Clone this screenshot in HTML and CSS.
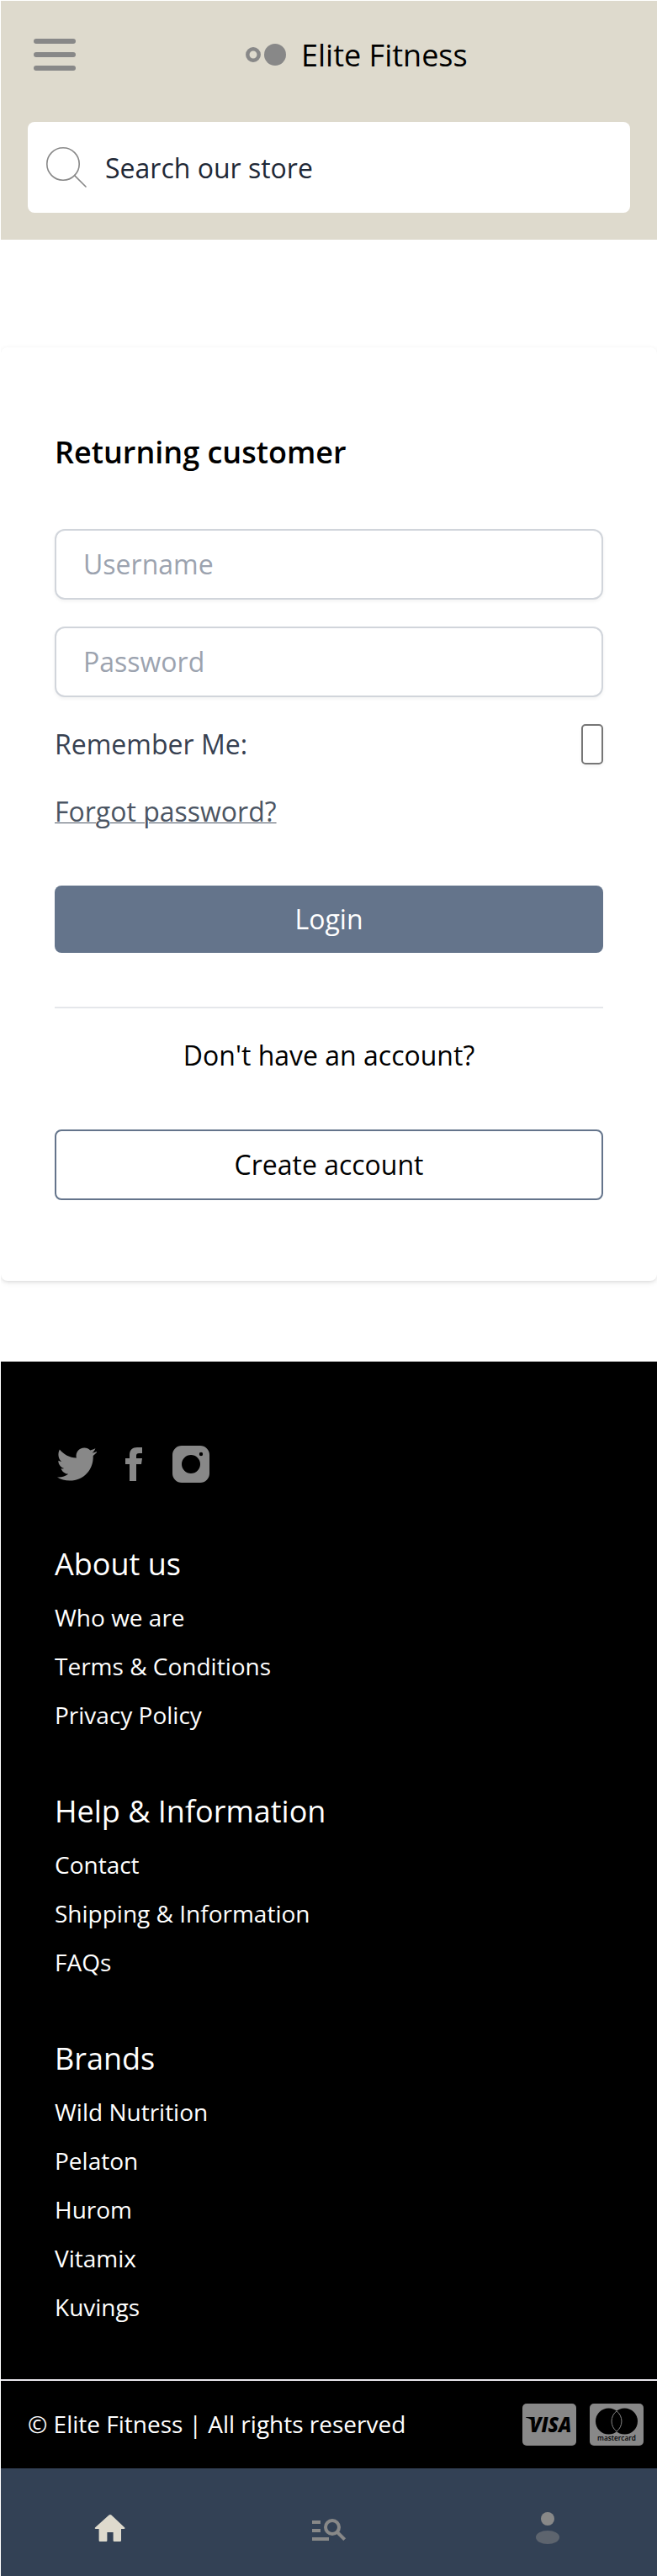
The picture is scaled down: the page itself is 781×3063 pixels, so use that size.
FILE: index.html
```html
<!DOCTYPE html>
<html lang="en">
<head>
<meta charset="utf-8">
<title>Elite Fitness</title>
<link rel="stylesheet" href="styles.css">
</head>
<body>
<header class="header">
  <div class="topbar">
    <svg class="menu-icon" viewBox="0 0 50 38"><path d="M3 3h44M3 19h44M3 35h44"/></svg>
    <div class="brand">
      <svg class="brand-icon" viewBox="0 0 48 26"><circle class="ring" cx="9" cy="13" r="6.7"/><circle class="dot" cx="35" cy="13" r="13"/></svg>
      <span class="brand-name">Elite Fitness</span>
    </div>
  </div>
  <label class="search">
    <svg class="search-icon" viewBox="0 0 48 48"><circle cx="20" cy="20" r="19.2"/><path d="M33.6 33.6 47 47"/></svg>
    <span class="search-text">Search our store</span>
  </label>
</header>

<main class="card">
  <h1 class="card-title">Returning customer</h1>
  <form class="form">
    <input class="field" type="text" placeholder="Username">
    <input class="field" type="password" placeholder="Password">
    <div class="remember"><span>Remember Me:</span><span class="checkbox"></span></div>
    <a class="forgot">Forgot password?</a>
    <button class="login" type="button">Login</button>
  </form>
  <hr class="divider">
  <p class="prompt">Don't have an account?</p>
  <a class="create">Create account</a>
</main>

<footer class="footer">
  <div class="footer-body">
    <div class="social">
      <svg class="tw" viewBox="0 0 47 40"><path d="M47 6c-1.300 1.500-2.700 2.800-4.300 3.900C43.300 26 32 39.500 14.800 39.500 9.300 39.500 4.200 38 0 35.500c5.100.5 9.500-1 13.200-3.700-4-.2-7.200-2.800-8.800-6.500 1.400.2 2.700.2 3.900-.2-4.200-1.200-7-4.900-7-9.300 1.300.7 2.600 1.100 4 1.100C1.400 13.800.2 7.500 2.900 2.400 8 8.600 14.500 12 22.800 12.400 21.500 5.800 26 .5 32.300.5c2.800 0 5.200 1.100 7 3 2.200-.5 4.200-1.200 6.100-2.300-.7 2.200-2.100 4-4 5.200 2-.2 3.900-.600 5.600-1.400z"/></svg>
      <svg class="fb" viewBox="0 0 20 40"><path d="M5 40V20H0v-7h5V9c0-6 3.500-9 9-9h6v7h-3.800C14 7 13 8 13 10v3h7l-1 7h-6v20z"/></svg>
      <svg class="ig" viewBox="0 0 44 44"><path fill-rule="evenodd" d="M11 0h22a11 11 0 0 1 11 11v22a11 11 0 0 1-11 11H11A11 11 0 0 1 0 33V11A11 11 0 0 1 11 0zM22 11a11 11 0 1 0 0 22 11 11 0 0 0 0-22zM34 7.800a2.200 2.200 0 1 0 0 4.400 2.200 2.200 0 0 0 0-4.400z"/></svg>
    </div>
    <section class="group">
      <h2>About us</h2>
      <ul><li>Who we are</li><li>Terms &amp; Conditions</li><li>Privacy Policy</li></ul>
    </section>
    <section class="group">
      <h2>Help &amp; Information</h2>
      <ul><li>Contact</li><li>Shipping &amp; Information</li><li>FAQs</li></ul>
    </section>
    <section class="group">
      <h2>Brands</h2>
      <ul><li>Wild Nutrition</li><li>Pelaton</li><li>Hurom</li><li>Vitamix</li><li>Kuvings</li></ul>
    </section>
  </div>
  <div class="legal">
    <span class="copyright">© Elite Fitness | All rights reserved</span>
    <div class="payments">
      <svg class="pay" viewBox="0 0 64 50"><rect width="64" height="50" rx="5"/><path class="flag" d="M4 16h7.500c1.300 0 2 .5 2.300 1.800L15.500 25C13 20.500 9.500 17.800 4 16.600z"/><text class="visa" x="8.500" y="33.500" textLength="50" lengthAdjust="spacingAndGlyphs">VISA</text></svg>
      <svg class="pay" viewBox="0 0 64 50"><rect width="64" height="50" rx="5"/><circle class="mc" cx="22.500" cy="21" r="15.500"/><circle class="mc" cx="41.500" cy="21" r="15.500"/><path class="lens" d="M32 8.800a15.500 15.500 0 0 1 0 24.400a15.500 15.500 0 0 1 0-24.400z"/><text class="mc-name" x="9" y="44.200" textLength="46" lengthAdjust="spacingAndGlyphs">mastercard</text></svg>
    </div>
  </div>
</footer>

<nav class="tabs">
  <svg class="tab" viewBox="0 0 48 48"><path class="home" d="M22.600 7.600a2 2 0 0 1 2.800 0L41 22.300c.8.800.5 1.700-.600 1.700H37v13.800a1.200 1.200 0 0 1-1.200 1.200h-7a1.200 1.200 0 0 1-1.200-1.200V28h-7.200v9.800a1.200 1.200 0 0 1-1.200 1.200h-7.400a1.200 1.200 0 0 1-1.200-1.200V24H6.800c-1.100 0-1.400-.9-.6-1.700z"/></svg>
  <svg class="tab" viewBox="0 0 48 48"><path class="gray" d="M4 14h10v4H4zM4 24h10v4H4zM4 34h20v4H4z"/><circle class="lens-ring" cx="28" cy="22" r="8"/><path class="handle" d="m33.500 27.500 9.200 9.200"/></svg>
  <svg class="tab" viewBox="0 0 48 48"><circle class="gray" cx="24" cy="12" r="8"/><ellipse class="gray faded" cx="24" cy="34" rx="14" ry="8"/></svg>
</nav>
</body>
</html>
```
FILE: styles.css
```css
* { box-sizing: border-box; margin: 0; padding: 0; }
body {
  width: 781px;
  padding: 1px 0 0 1px;
  background: #fff;
  color: #000;
  font-family: "Open Sans", "Noto Sans", sans-serif;
  font-size: 32px;
  line-height: 48px;
}
svg { display: block; flex: none; }

.header { height: 284px; padding: 32px; background: #dedacd; }
.topbar { display: flex; align-items: center; height: 64px; padding-left: 7px; }
.menu-icon { width: 50px; height: 38px; fill: none; stroke: #888; stroke-width: 6; stroke-linecap: round; }
.brand { display: flex; align-items: center; margin-left: 202px; }
.brand-icon { width: 48px; height: 26px; }
.ring { fill: none; stroke: #888; stroke-width: 4.500; }
.dot { fill: #888; }
.brand-name { margin-left: 18px; padding-top: 2px; font-size: 36px; }
.search { display: flex; align-items: center; height: 108px; margin-top: 48px; padding-left: 22px; border-radius: 8px; background: #fff; }
.search-icon { width: 48px; height: 48px; fill: none; stroke: #888; stroke-width: 1.600; stroke-linecap: round; }
.search-text { margin-left: 22px; padding-top: 2px; color: #1f2937; }

.card {
  height: 1110px;
  margin-top: 128px;
  padding: 97px 64px 0;
  border-radius: 8px;
  box-shadow: 0 2px 6px rgba(0, 0, 0, .1), 0 2px 4px -2px rgba(0, 0, 0, .1);
  clip-path: inset(-12px 0);
}
.card-title { font-size: 36px; font-weight: 600; line-height: 56px; }
.form { display: flex; flex-direction: column; margin-top: 63px; }
.field {
  width: 100%; height: 84px; margin-bottom: 32px; padding: 0 32px 1px;
  border: 2px solid #d1d5db; border-radius: 12px; background: #fff;
  box-shadow: 0 2px 4px rgba(0, 0, 0, .05); font: inherit;
}
.field::placeholder { color: #9ca3af; opacity: 1; }
.remember { display: flex; justify-content: space-between; align-items: center; height: 48px; color: #374151; }
.checkbox { width: 26px; height: 48px; border: 2px solid #767676; border-radius: 5px; box-shadow: 0 2px 4px rgba(0, 0, 0, .05); }
.forgot { align-self: flex-start; margin-top: 32px; color: #4b5563; text-decoration: underline; text-decoration-thickness: 1px; }
.login { height: 80px; margin-top: 64px; border: 0; border-radius: 8px; background: #64748b; color: #fff; font: inherit; }
.divider { height: 2px; margin-top: 64px; border: 0; background: #e5e7eb; }
.prompt { margin-top: 32px; text-align: center; }
.create { display: block; height: 84px; margin-top: 64px; border: 2px solid #64748b; border-radius: 8px; text-align: center; line-height: 80px; }

.footer { height: 1316px; margin-top: 96px; background: #000; color: #fff; }
.footer-body { height: 1210px; padding: 100px 64px 0; }
.social { display: flex; align-items: center; height: 44px; padding-left: 3px; }
.social svg { fill: #888; }
.tw { width: 47px; height: 40px; }
.fb { width: 20px; height: 40px; margin-left: 34px; }
.ig { width: 44px; height: 44px; margin-left: 36px; }
.group { padding-top: 49px; }
.group:nth-of-type(1) { padding-top: 69px; }
.group h2 { font-size: 36px; font-weight: 400; line-height: 56px; }
.group ul { margin-top: 15px; list-style: none; }
.group li { font-size: 28px; line-height: 40px; margin-bottom: 18px; }
.legal { display: flex; justify-content: space-between; align-items: center; height: 106px; padding: 0 16px 0 32px; border-top: 2px solid #e7e5eb; }
.copyright { padding-bottom: 2px; font-size: 28px; line-height: 40px; }
.payments { display: flex; gap: 16px; }
.pay { width: 64px; height: 50px; fill: #888; }
.visa { fill: #000; font-size: 24px; font-weight: 800; font-style: italic; }
.flag { fill: #000; }
.mc { fill: #000; }
.lens { fill: #000; stroke: #888; }
.mc-name { fill: #000; font-size: 8.500px; font-weight: 600; }

.tabs { display: grid; grid-template-columns: repeat(3, 1fr); place-items: center; height: 128px; padding-top: 16px; background: #334155; }
.tab { width: 48px; height: 48px; }
.home { fill: #dedacd; }
.gray { fill: #888; }
.faded { opacity: .5; }
.lens-ring, .handle { fill: none; stroke: #888; stroke-width: 4; }
```
